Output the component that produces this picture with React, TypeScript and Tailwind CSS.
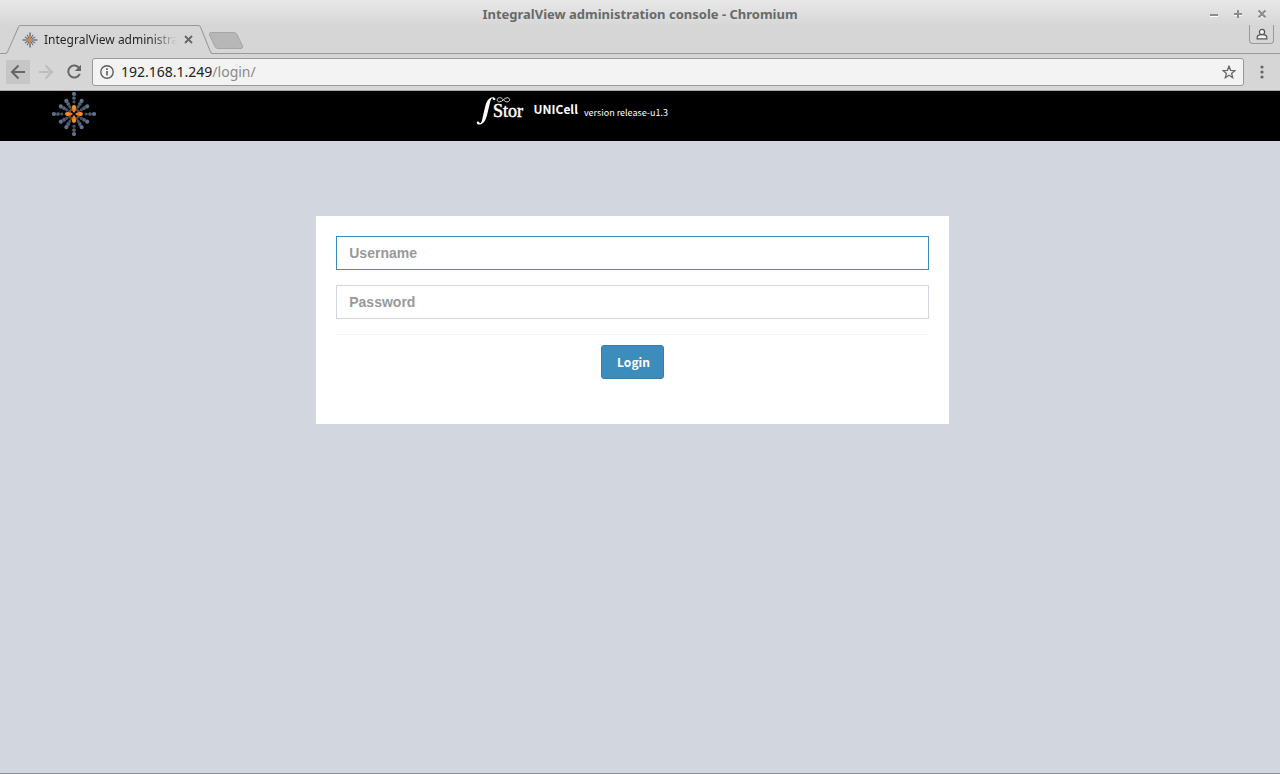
import React from 'react';

const SPOKES = [0, 30, 60, 90, 120, 150, 180, 210, 240, 270, 300, 330];

function Starburst({ className }: { className: string }) {
  return (
    <svg viewBox="-22 -22 44 44" className={className} aria-hidden="true">
      {SPOKES.map((angle) => {
        const main = angle % 90 === 0;
        const radii = main ? [20, 16, 12.2] : [15.2, 11.6, 8.4];
        return (
          <g key={angle} transform={`rotate(${angle})`}>
            {radii.map((r, i) => (
              <circle key={r} cx={r} cy={0} r={2.1 - i * 0.25} fill={i === 0 ? '#5f718d' : i === 1 ? '#526179' : '#4a5464'} />
            ))}
            {!main && <circle cx={5.2} cy={0} r={1.5} fill="#5a4a42" />}
          </g>
        );
      })}
      {[0, 90, 180, 270].map((angle) => (
        <g key={angle} transform={`rotate(${angle})`}>
          <path d="M1 0L3 -1.6L7 -2.1V2.1L3 1.6Z" fill="#ee7d1b" />
          <circle cx={6.8} cy={0} r={2.1} fill="#fb8f26" />
        </g>
      ))}
    </svg>
  );
}

function StorLogo() {
  return (
    <svg viewBox="0 0 50 32" className="h-8 w-[50px]" role="img" aria-label="Stor">
      <path
        d="M19.4 4C19 2.2 16.6 1.600 14.600 2.700C11.600 4.200 10.300 7.200 9.400 10.800L6.600 22.400C6 25.600 5.400 27.800 4.200 28.200C3.500 28.300 3.400 27.300 2.800 26.800C1.800 26.100 .4 26.900 .8 28.200C1.200 29.600 3.600 30 5.600 28.900C8.600 27.300 10 24 11 20.200L13.800 8.600C14.500 5.600 15 3.600 16.100 3.300C16.800 3.300 16.700 4.800 17.700 5.100C18.700 5.300 19.600 4.900 19.400 4Z"
        fill="#fff"
      />
      <path
        d="M27.500 4.900C26 3.100 24.800 2.600 23.500 2.700C20.400 2.900 20.400 6.900 23.500 6.900C26.700 6.800 28 2.900 31.200 2.700C34.400 2.600 34.400 6.900 31.200 6.900C29.700 6.900 28.700 6.200 27.500 4.900Z"
        fill="none"
        stroke="#ddd"
        strokeWidth="1"
      />
      <text x="17" y="22" fill="#fff" stroke="#fff" strokeWidth=".5" fontSize="18" fontFamily="Liberation Serif, serif">
        Stor
      </text>
    </svg>
  );
}

function Tab() {
  return (
    <div className="relative flex h-7 w-[206px] items-center pl-4">
      <svg viewBox="0 0 206 28" className="absolute top-0 left-0 h-[29px] w-[206px]" preserveAspectRatio="none" aria-hidden="true">
        <path d="M0 28L1.5 26.5L12.5 2Q13 .5 15 .5H192Q194 .5 194.5 2L204.5 26.5L206 28Z" fill="#d6d6d6" />
        <path d="M0 27.2L1.5 26L12.5 2Q13 .5 15 .5H192Q194 .5 194.5 2L204.5 26L206 27.2" fill="none" stroke="#999" />
      </svg>
      <svg viewBox="-8 -8 16 16" className="relative mt-0.5 h-4 w-4" aria-hidden="true">
        {SPOKES.map((angle) => (
          <path
            key={angle}
            transform={`rotate(${angle})`}
            d={angle % 90 === 0 ? 'M1 0H7.5' : 'M1 0H6'}
            stroke="#64748b"
            strokeWidth={angle % 90 === 0 ? 1.5 : 1.1}
          />
        ))}
        <path d="M-4 0H4M0 -4V4" stroke="#e08a3c" strokeWidth="1.7" />
        <circle r="2.200" fill="#d98a4a" />
      </svg>
      <span className="relative mt-px ml-1.5 w-[133px] overflow-hidden bg-linear-to-r from-[#222] from-80% to-transparent bg-clip-text font-['Noto_Sans',sans-serif] text-[12px] leading-5 whitespace-nowrap text-transparent">
        IntegralView administra
      </span>
      <button type="button" aria-label="Close tab" className="relative mt-px ml-[7px]">
        <svg viewBox="0 0 9 9" className="h-[9px] w-[9px]">
          <path d="M1 1L8 8M8 1L1 8" stroke="#666" strokeWidth="1.8" />
        </svg>
      </button>
    </div>
  );
}

function BrowserChrome() {
  return (
    <div className="bg-[#d6d6d6]">
      <div className="grid h-[25px] grid-cols-[1fr_auto_1fr] items-center bg-linear-to-b from-[#e8e8e8] to-[#d7d7d7] pt-[3px]">
        <span />
        <span className="font-['Noto_Sans',sans-serif] text-[13px] leading-5 font-bold text-[#696969]">
          IntegralView administration console - Chromium
        </span>
        <div className="flex justify-end gap-3.5 pr-[13px]">
          <button type="button" aria-label="Minimize">
            <svg viewBox="0 0 10 10" className="h-2.5 w-2.5">
              <path d="M1 7.5H9" stroke="#fff" />
              <path d="M1 6H9" stroke="#8c8c8c" strokeWidth="2" />
            </svg>
          </button>
          <button type="button" aria-label="Maximize">
            <svg viewBox="0 0 10 10" className="h-2.5 w-2.5">
              <path d="M1 6.5H9" stroke="#fff" />
              <path d="M1 5H9M5 1V9" stroke="#8c8c8c" strokeWidth="2" />
            </svg>
          </button>
          <button type="button" aria-label="Close">
            <svg viewBox="0 0 10 10" className="h-2.5 w-2.5">
              <path d="M1.5 2.5L8.5 9.5M8.5 2.5L1.5 9.5" stroke="#fff" strokeWidth="2" />
              <path d="M1.5 1.5L8.5 8.5M8.5 1.5L1.5 8.5" stroke="#8c8c8c" strokeWidth="2.2" />
            </svg>
          </button>
        </div>
      </div>

      <div className="flex h-[29px] items-start border-b border-[#999] pr-1.5 pl-1.5">
        <Tab />
        <button type="button" aria-label="New tab" className="mt-1.5 -ml-1">
          <svg viewBox="0 0 36 19" className="h-[19px] w-9">
            <path d="M3 1.5H26Q28 1.5 29 3.5L34.5 15Q35 17.5 33 17.5H10Q8 17.5 7 15.5L1.5 4Q1 1.5 3 1.5Z" fill="#b7b7b7" stroke="#a5a5a5" />
          </svg>
        </button>
        <button
          type="button"
          aria-label="Profile"
          className="ml-auto flex h-[19px] w-[25px] items-center justify-center rounded-b border border-t-0 border-[#999]"
        >
          <svg viewBox="0 0 12 12" className="h-3 w-3" fill="#f4f4f4" stroke="#555" strokeWidth="1.2">
            <path d="M1.2 10.8V9Q1.2 7.2 4.6 6.6H7.4Q10.8 7.2 10.8 9V10.8Z" />
            <circle cx="6" cy="4" r="2.6" />
          </svg>
        </button>
      </div>

      <div className="flex h-[37px] items-center border-b border-[#a9a9a9] pr-4 pl-1.5">
        <button type="button" aria-label="Back" className="flex h-6 w-6 items-center justify-center rounded-xs bg-[#c6c6c6]">
          <svg viewBox="0 0 16 16" className="h-4 w-4" fill="none" stroke="#666" strokeWidth="2">
            <path d="M15 8H2.5M8.5 1.5L2 8L8.5 14.5" />
          </svg>
        </button>
        <button type="button" aria-label="Forward" className="ml-1 flex h-6 w-6 items-center justify-center">
          <svg viewBox="0 0 16 16" className="h-4 w-4" fill="none" stroke="#bdbdbd" strokeWidth="2">
            <path d="M1 8H13.5M7.5 1.5L14 8L7.5 14.5" />
          </svg>
        </button>
        <button type="button" aria-label="Reload" className="ml-1 flex h-6 w-6 items-center justify-center">
          <svg viewBox="0 0 16 16" className="h-4 w-4">
            <path d="M13.3 4.2A6 6 0 1 0 13.8 9.8" fill="none" stroke="#666" strokeWidth="2" />
            <path d="M15 .8V7H8.8Z" fill="#666" />
          </svg>
        </button>
        <div className="ml-1.5 flex h-7 min-w-0 flex-1 items-center rounded-[3px] border border-[#999] bg-[#f3f3f3] px-[7px]">
          <svg viewBox="0 0 14 14" className="h-3.5 w-3.5" aria-hidden="true">
            <circle cx="7" cy="7" r="6.2" fill="none" stroke="#5c5c5c" strokeWidth="1.4" />
            <path d="M7 6V10.5M7 3.3V4.9" stroke="#5c5c5c" strokeWidth="1.6" />
          </svg>
          <span className="ml-[7px] flex-1 font-['Noto_Sans',sans-serif] text-[14px] leading-5 text-[#222]">
            192.168.1.249<span className="text-[#8a8a8a]">/login/</span>
          </span>
          <button type="button" aria-label="Bookmark this page">
            <svg viewBox="0 0 14 14" className="h-3.5 w-3.5">
              <path
                d="M7 1.2L8.6 5.3L13 5.6L9.6 8.4L10.7 12.7L7 10.3L3.3 12.7L4.4 8.4L1 5.6L5.4 5.3Z"
                fill="none"
                stroke="#666"
                strokeWidth="1.3"
              />
            </svg>
          </button>
        </div>
        <button type="button" aria-label="Menu" className="ml-4">
          <svg viewBox="0 0 4 14" className="h-3.5 w-1" fill="#666">
            <circle cx="2" cy="2" r="1.6" />
            <circle cx="2" cy="7" r="1.6" />
            <circle cx="2" cy="12" r="1.6" />
          </svg>
        </button>
      </div>
    </div>
  );
}

export default function App() {
  return (
    <div className="flex min-h-screen flex-col border-b border-[#8f9194] bg-[#d2d6df]">
      <BrowserChrome />

      <header className="grid h-[50px] grid-cols-[37%_1fr] items-start bg-black font-['Noto_Sans_CJK_SC',sans-serif] text-white">
        <Starburst className="mt-px ml-[52px] h-11 w-11" />
        <div className="flex items-start pt-1 pl-0.5">
          <StorLogo />
          <h1 className="mt-1 ml-2 text-[12px] leading-5 font-bold">UNICell</h1>
          <span className="mt-2 ml-1.5 text-[9px] leading-5">version release-u1.3</span>
        </div>
      </header>

      <main className="flex flex-1 items-start justify-center pt-[75px] pr-[15px]">
        <form className="w-1/2 bg-white px-5 pt-5 pb-[45px]" onSubmit={(e) => e.preventDefault()}>
          <input
            type="text"
            aria-label="Username"
            placeholder="Username"
            className="block h-[34px] w-full border border-[#3c8dbc] px-3 font-['Liberation_Sans',sans-serif] text-[14px] font-bold text-[#555] outline-none placeholder:text-[#999]"
          />
          <input
            type="password"
            aria-label="Password"
            placeholder="Password"
            className="mt-[15px] block h-[34px] w-full border border-[#d2d6de] px-3 font-['Liberation_Sans',sans-serif] text-[14px] font-bold text-[#555] outline-none placeholder:text-[#999]"
          />
          <div className="mt-[15px] flex justify-center border-t border-[#f4f4f4] pt-2.5">
            <button
              type="submit"
              className="h-[34px] rounded-[3px] border border-[#367fa9] bg-[#3c8dbc] pr-[13px] pl-[15px] font-['Noto_Sans_CJK_SC',sans-serif] text-[12px] leading-5 font-bold text-white"
            >
              Login
            </button>
          </div>
        </form>
      </main>
    </div>
  );
}
